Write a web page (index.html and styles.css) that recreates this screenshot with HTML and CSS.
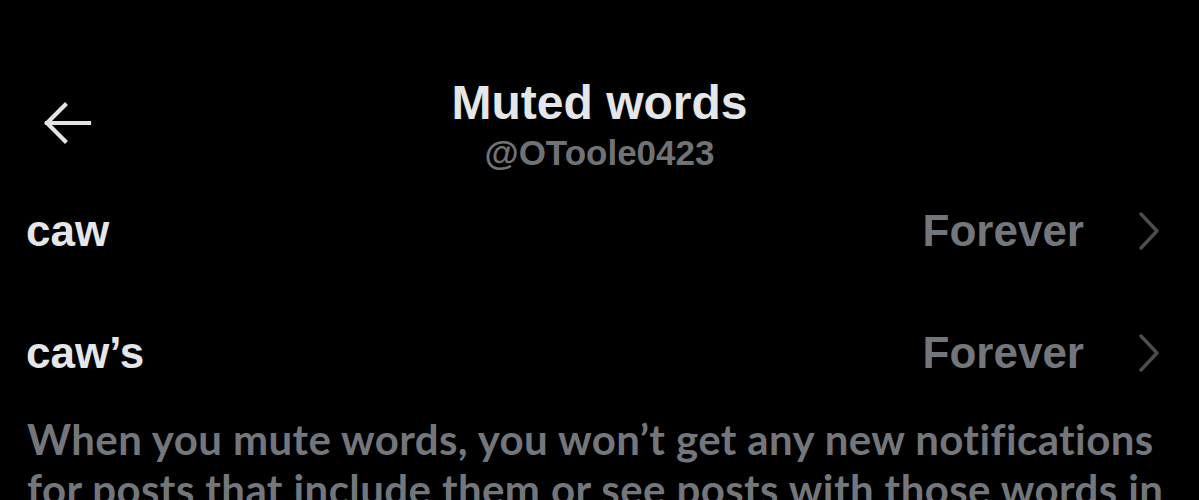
FILE: index.html
```html
<!DOCTYPE html>
<html>
<head>
<meta charset="utf-8">
<link rel="stylesheet" href="styles.css">
</head>
<body>
<div class="page">
  <header class="header">
    <div class="back">
      <svg width="50" height="42" viewBox="0 0 50 42" fill="none" stroke="#e2e4e5" stroke-width="4.2" stroke-linecap="square" stroke-linejoin="miter">
        <path d="M4 21 H46"/>
        <path d="M22 3 L4 21 L22 39"/>
      </svg>
    </div>
    <div class="titles">
      <div class="title">Muted words</div>
      <div class="handle">@OToole0423</div>
    </div>
    <div class="spacer"></div>
  </header>
  <div class="row">
    <span class="word">caw</span>
    <span class="meta"><span class="dur">Forever</span>
      <svg class="chev" width="22" height="38" viewBox="0 0 22 38" fill="none" stroke="#4b4e51" stroke-width="3.4" stroke-linecap="round" stroke-linejoin="round"><path d="M3 2 L19 19 L3 36"/></svg>
    </span>
  </div>
  <div class="row">
    <span class="word">caw’s</span>
    <span class="meta"><span class="dur">Forever</span>
      <svg class="chev" width="22" height="38" viewBox="0 0 22 38" fill="none" stroke="#4b4e51" stroke-width="3.4" stroke-linecap="round" stroke-linejoin="round"><path d="M3 2 L19 19 L3 36"/></svg>
    </span>
  </div>
  <p class="note">When you mute words, you won’t get any new notifications for posts that include them or see posts with those words in your timeline.</p>
</div>
</body>
</html>
```
FILE: styles.css
```css
html, body {
  margin: 0;
  padding: 0;
  background: #000;
  overflow: hidden;
}
.page {
  width: 1199px;
  height: 500px;
  overflow: hidden;
  font-family: "Liberation Sans", Arial, sans-serif;
}
.header {
  display: grid;
  grid-template-columns: 200px 1fr 200px;
  align-items: start;
  padding-top: 76px;
  height: 94px;
}
.back {
  padding-left: 43px;
  padding-top: 26px;
}
.back svg { display: block; }
.titles {
  text-align: center;
}
.title {
  color: #e4e6e7;
  font-weight: 700;
  font-size: 48px;
  line-height: 54px;
}
.handle {
  color: #6f7376;
  font-weight: 700;
  font-size: 35px;
  line-height: 40px;
  margin-top: 3px;
}
.row {
  display: flex;
  justify-content: space-between;
  align-items: center;
  height: 122px;
  padding: 0 39px 0 26px;
  box-sizing: border-box;
}
.word {
  color: #e4e6e7;
  font-weight: 700;
  font-size: 44px;
}
.meta {
  display: flex;
  align-items: center;
  gap: 54px;
}
.dur {
  color: #73777b;
  font-weight: 700;
  font-size: 44px;
}
.chev { display: block; }
.note {
  margin: 0;
  padding: 0 30px 0 27px;
  color: #73777b;
  font-family: Lato, "Noto Sans", sans-serif;
  font-weight: 700;
  font-size: 42px;
  letter-spacing: 0.4px;
  line-height: 50px;
}
```
